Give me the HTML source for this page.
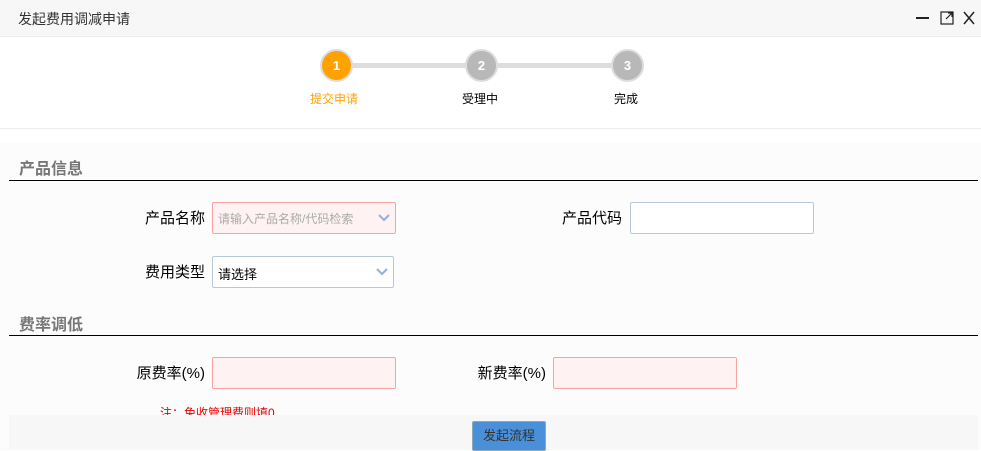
<!DOCTYPE html><html><head><meta charset="utf-8"><style>
*{margin:0;padding:0;box-sizing:border-box}
body{width:981px;height:450px;overflow:hidden;background:#fff;font-family:"Liberation Sans","Noto Sans CJK SC",sans-serif;font-size:14px;color:#000;position:relative}
.a{position:absolute}
.title{left:0;top:0;width:981px;height:37px;background:#f7f7f7;border-bottom:1px solid #ececec}
.circ{width:33px;height:33px;border-radius:50%;border:2px solid #ddd;color:#fff;font-weight:bold;font-size:13px;text-align:center;line-height:29px}
.lbl{font-size:12px}
.sec{font-size:16px;font-weight:bold;color:#777}
.hr{height:1px;background:#000;left:9px;width:969px}
.inp{height:32px;border:1px solid #b9c8d9;border-radius:2px;background:#fff}
.red{border-color:#f5a3a3;background:#fff2f2}
.fl{font-size:15px;text-align:right}
.chev{position:absolute;right:5px;top:8px}
</style></head><body>
<div class="a title"><span class="a" style="left:18px;top:9px;font-size:14px;color:#333">发起费用调减申请</span>
<svg class="a" style="left:916px;top:10px" width="60" height="16" viewBox="0 0 60 16"><path d="M0 8h13" stroke="#222" stroke-width="2"/><rect x="25" y="2" width="12" height="12" fill="none" stroke="#222" stroke-width="1.2"/><path d="M30 9l6-6M32 3h4v4" stroke="#222" stroke-width="1.2" fill="none"/><path d="M48 2l10 12M58 2l-10 12" stroke="#222" stroke-width="1.5"/></svg></div>
<div class="a" style="left:0;top:128px;width:981px;height:1px;background:#ececec"></div>
<div class="a" style="left:0;top:143px;width:981px;height:307px;background:#fcfcfc"></div>
<div class="a" style="left:350px;top:63px;width:265px;height:5px;background:#ddd"></div>
<div class="a circ" style="left:320px;top:49px;background:#ffa200">1</div>
<div class="a circ" style="left:465px;top:49px;background:#b8b8b8">2</div>
<div class="a circ" style="left:611px;top:49px;background:#b8b8b8">3</div>
<div class="a lbl" style="left:310px;top:90px;color:#ffa200">提交申请</div>
<div class="a lbl" style="left:462px;top:90px">受理中</div>
<div class="a lbl" style="left:614px;top:90px">完成</div>
<div class="a sec" style="left:19px;top:155px">产品信息</div>
<div class="a hr" style="top:180px"></div>
<div class="a fl" style="left:120px;top:207px;width:85px">产品名称</div>
<div class="a inp red" style="left:212px;top:202px;width:184px"><span class="a" style="left:5px;top:7px;font-size:12px;color:#aaa">请输入产品名称/代码检索</span><svg class="chev" width="12" height="12"><path d="M1 4l5 5 5-5" stroke="#8fb0e0" stroke-width="2" fill="none"/></svg></div>
<div class="a fl" style="left:540px;top:207px;width:82px">产品代码</div>
<div class="a inp" style="left:630px;top:202px;width:184px"></div>
<div class="a fl" style="left:120px;top:261px;width:85px">费用类型</div>
<div class="a inp" style="left:212px;top:256px;width:182px"><span class="a" style="left:5px;top:7px;font-size:13px">请选择</span><svg class="chev" width="12" height="12"><path d="M1 4l5 5 5-5" stroke="#8fb0e0" stroke-width="2" fill="none"/></svg></div>
<div class="a sec" style="left:19px;top:311px">费率调低</div>
<div class="a hr" style="top:335px"></div>
<div class="a fl" style="left:110px;top:362px;width:95px">原费率(%)</div>
<div class="a inp red" style="left:212px;top:357px;width:184px"></div>
<div class="a fl" style="left:450px;top:362px;width:96px">新费率(%)</div>
<div class="a inp red" style="left:553px;top:357px;width:184px"></div>
<div class="a" style="left:160px;top:404px;font-size:12px;color:#e00">注：免收管理费则填0</div>
<div class="a" style="left:9px;top:415px;width:969px;height:35px;background:#f7f7f7"></div>
<div class="a" style="left:472px;top:421px;width:74px;height:30px;background:#4a90d9;border:1px solid #8ab;border-radius:2px;color:#333;font-size:13px;text-align:center;line-height:28px">发起流程</div>
</body></html>
